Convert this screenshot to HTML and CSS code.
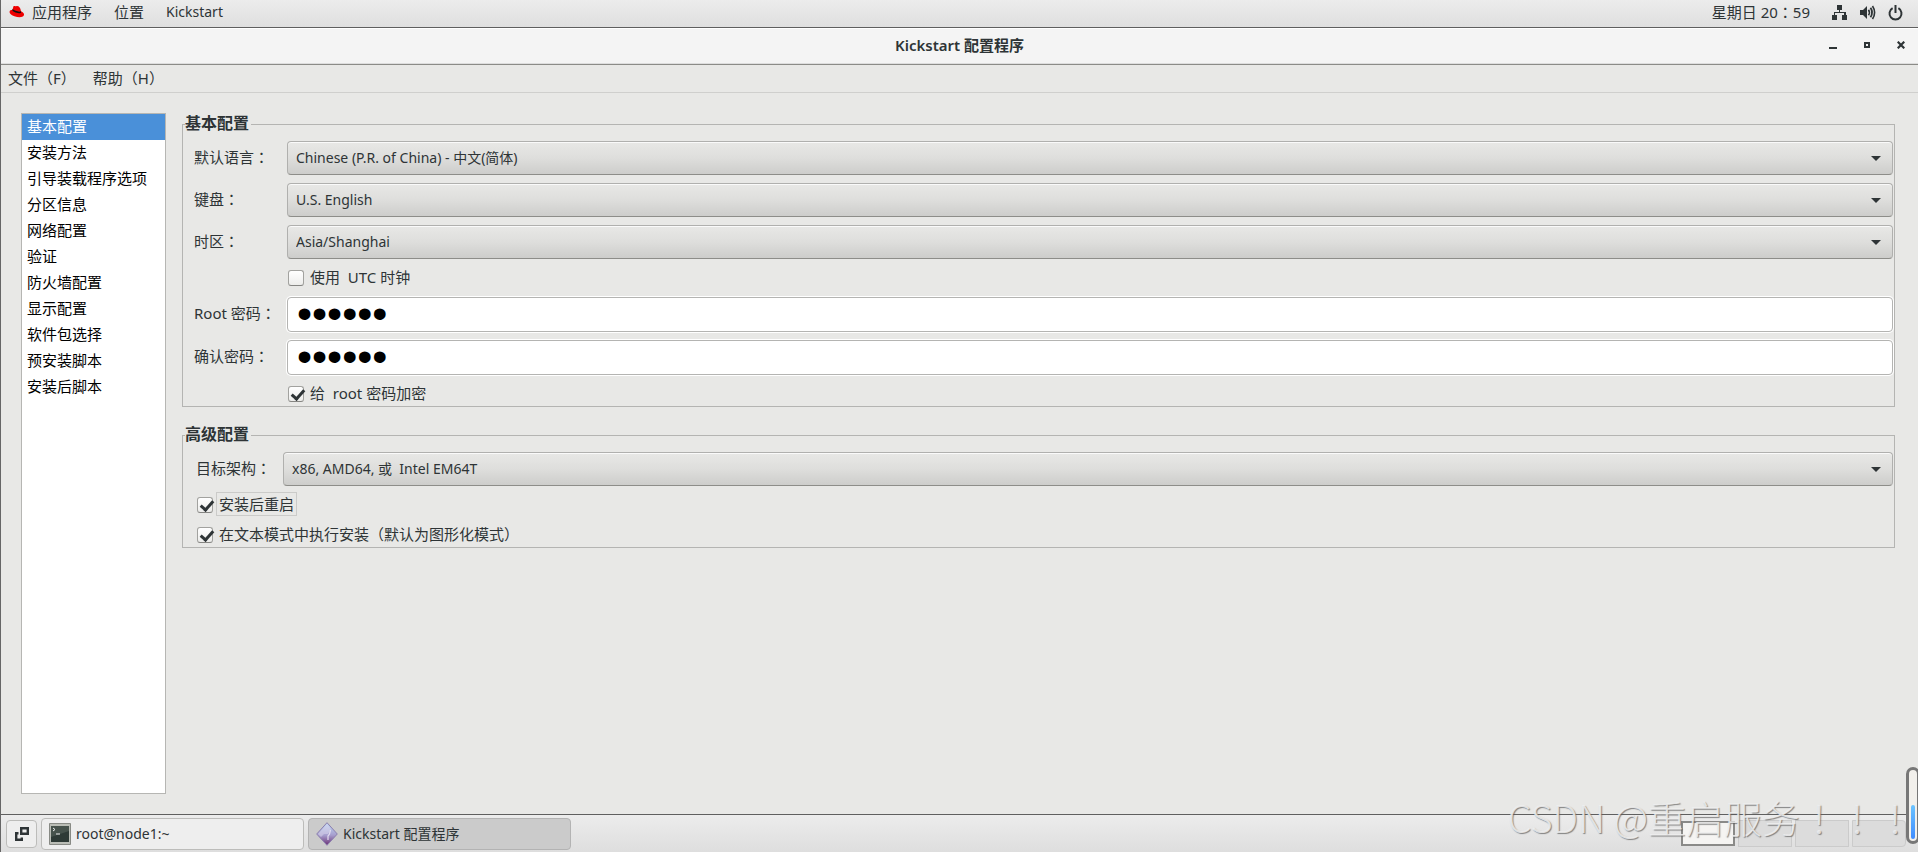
FILE: index.html
```html
<!DOCTYPE html>
<html lang="zh-CN">
<head>
  <meta charset="UTF-8">
  <meta name="viewport" content="width=device-width, initial-scale=1.0">
  <title>Kickstart 配置程序</title>
  <link rel="stylesheet" href="styles.css">
</head>
<body>
  <header class="top-bar">
    <nav class="top-menu">
      <button type="button" class="apps">
        <svg width="16" height="14" viewBox="0 0 16 14">
          <path d="M4.5 1.2 C5.4 .8 6 1.6 7.2 1.2 C9.4 .6 11.3 2.2 12 6.2 C14.6 7.4 15.6 9 14.8 10.6 C13.6 12.8 9 12.6 5.4 11.2 C1.8 9.8 .2 7.8 .6 6.4 C.9 5.2 2.2 4.9 3.4 5 Z" fill="#e00"/>
          <path d="M3.3 5 C3.2 6.6 8.6 8.9 11.6 7.9 C12.2 7.6 12.1 6.9 12 6.2 C10.6 7.4 5.4 6 3.6 4.1 Z" fill="#111"/>
        </svg>
        应用程序
      </button>
      <button type="button">位置</button>
      <button type="button">Kickstart</button>
    </nav>
    <div class="status">
      <span class="clock">星期日 20<span class="mark" lang="zh-TW">：</span>59</span>
      <svg width="16" height="16" viewBox="0 0 16 16" fill="#2e3436">
        <path d="M5 0h5v5H8v2h6v3h1v5h-5v-5h2V8H3v2h2v5H0v-5h2V7h5V5H5z"/>
      </svg>
      <svg width="16" height="16" viewBox="0 0 16 16" fill="none" stroke="#2e3436">
        <path d="M0 5h3l4-4v13l-4-4H0z" fill="#2e3436" stroke="none"/>
        <path d="M8.5 4.8q1.8 2.7 0 5.4" stroke-width="1.6"/>
        <path d="M10.5 2.8q3.2 4.7 0 9.4" stroke-width="1.8"/>
        <path d="M12.5 1q4.2 6.5 0 13" stroke-width="1.6"/>
      </svg>
      <svg width="16" height="16" viewBox="0 0 16 16" fill="none" stroke="#2e3436" stroke-width="2">
        <path d="M4.6 3.2a6 6 0 1 0 5.8 0M7.5 0v8"/>
      </svg>
    </div>
  </header>

  <div class="title-bar">
    <h1>Kickstart 配置程序</h1>
    <div class="window-buttons">
      <button type="button" aria-label="最小化">
        <svg width="8" height="8"><path d="M0 6h8v2H0z" fill="#2e3436"/></svg>
      </button>
      <button type="button" aria-label="最大化">
        <svg width="8" height="8"><path d="M2 2h4v4H2z" fill="none" stroke="#2e3436" stroke-width="2"/></svg>
      </button>
      <button type="button" aria-label="关闭">
        <svg width="8" height="8"><path d="M.7 .7l6.6 6.6M7.3 .7L.7 7.3" stroke="#2e3436" stroke-width="2.2"/></svg>
      </button>
    </div>
  </div>

  <nav class="menu-bar">
    <button type="button">文件（F）</button>
    <button type="button">帮助（H）</button>
  </nav>

  <main>
    <ul class="sections">
      <li class="selected">基本配置</li>
      <li>安装方法</li>
      <li>引导装载程序选项</li>
      <li>分区信息</li>
      <li>网络配置</li>
      <li>验证</li>
      <li>防火墙配置</li>
      <li>显示配置</li>
      <li>软件包选择</li>
      <li>预安装脚本</li>
      <li>安装后脚本</li>
    </ul>

    <form class="settings">
      <fieldset>
        <legend>基本配置</legend>
        <div class="row">
          <label for="lang">默认语言<span class="mark" lang="zh-TW">：</span></label>
          <div class="combo"><select id="lang"><option>Chinese (P.R. of China) - 中文(简体)</option></select></div>
        </div>
        <div class="row">
          <label for="keyboard">键盘<span class="mark" lang="zh-TW">：</span></label>
          <div class="combo"><select id="keyboard"><option>U.S. English</option></select></div>
        </div>
        <div class="row">
          <label for="timezone">时区<span class="mark" lang="zh-TW">：</span></label>
          <div class="combo"><select id="timezone"><option>Asia/Shanghai</option></select></div>
        </div>
        <label class="check indent"><input type="checkbox"><span>使用  UTC 时钟</span></label>
        <div class="row">
          <label for="password">Root 密码<span class="mark" lang="zh-TW">：</span></label>
          <input type="password" id="password" value="123456">
        </div>
        <div class="row">
          <label for="confirm">确认密码<span class="mark" lang="zh-TW">：</span></label>
          <input type="password" id="confirm" value="123456">
        </div>
        <label class="check indent"><input type="checkbox" checked><span>给  root 密码加密</span></label>
      </fieldset>

      <fieldset class="advanced">
        <legend>高级配置</legend>
        <div class="row">
          <label for="arch">目标架构<span class="mark" lang="zh-TW">：</span></label>
          <div class="combo"><select id="arch"><option>x86, AMD64, 或&nbsp; Intel EM64T</option></select></div>
        </div>
        <label class="check"><input type="checkbox" checked><span class="focused">安装后重启</span></label>
        <label class="check"><input type="checkbox" checked><span>在文本模式中执行安装（默认为图形化模式）</span></label>
      </fieldset>
    </form>
  </main>

  <footer class="task-bar">
    <button type="button" class="show-windows" aria-label="窗口">
      <svg width="14" height="14" viewBox="0 0 14 14" fill="none" stroke="#2e3436" stroke-width="2.4">
        <path d="M6.2 1.2h6.6v5.6H6.2z"/>
        <path d="M3.5 6.2H1.2v6.6h5.6v-2.3"/>
      </svg>
    </button>
    <button type="button" class="task">
      <svg width="22" height="22" viewBox="0 0 22 22">
        <path d="M.5 .5h21v21H.5z" fill="#babdb6" stroke="#888a85"/>
        <path d="M2 3h18v16H2z" fill="#2e3a36"/>
        <path d="M2 3h18v5L2 14z" fill="#46524c"/>
        <path d="M4 5l2 1.5L4 8M7 11h4" fill="none" stroke="#eee"/>
      </svg>
      root@node1:~
    </button>
    <button type="button" class="task active">
      <svg width="22" height="24" viewBox="0 0 22 24">
        <defs>
          <linearGradient id="gem" x1="0" y1="0" x2="0" y2="1">
            <stop offset="0" stop-color="#bcd8f4"/>
            <stop offset=".55" stop-color="#a79fce"/>
            <stop offset="1" stop-color="#6a2f75"/>
          </linearGradient>
        </defs>
        <path d="M11 .7L21.3 12 11 23.3 .7 12z" fill="url(#gem)" stroke="#8c7fae"/>
        <path d="M2 12l9-10 4 5-3 5H8l-3 3z" fill="#ded8ee" opacity=".5"/>
        <path d="M14.5 8l-1 4-1.5 2v4" fill="none" stroke="#e4dcf0" stroke-width="1.2"/>
      </svg>
      Kickstart 配置程序
    </button>
    <div class="workspaces">
      <span class="current"></span>
      <span></span>
      <span></span>
      <span></span>
    </div>
  </footer>

  <div class="level"><div></div></div>
  <div class="watermark">CSDN @重启服务<span class="mark" lang="zh-TW">！！！</span></div>
</body>
</html>
```
FILE: styles.css
```css
* {
  box-sizing: border-box;
}
body {
  margin: 0;
  min-height: 100vh;
  display: flex;
  flex-direction: column;
  position: relative;
  overflow: hidden;
  border-left: 1px solid #666;
  background: #e8e8e6;
  color: #2e3436;
  font-family: "Noto Sans", "Noto Sans CJK SC", sans-serif;
  font-size: 15px;
  line-height: 20px;
}
button, select, input {
  font: inherit;
  color: inherit;
}
button {
  border: none;
  background: none;
  padding: 0;
}
svg {
  display: block;
  flex: none;
}
/* full-width punctuation centred in its cell */
.mark {
  font-family: "Noto Sans CJK TC", sans-serif;
  line-height: 1;
}

/* top panel */
.top-bar {
  display: flex;
  justify-content: space-between;
  align-items: center;
  height: 28px;
  padding: 0 14px 2px 8px;
  background: linear-gradient(#ececec, #dfdfdf);
  border-bottom: 1px solid #5f5f5f;
}
.top-menu, .status, .apps {
  display: flex;
  align-items: center;
}
.top-menu {
  gap: 22px;
  line-height: 18px;
  padding-bottom: 2px;
}
.apps {
  gap: 7px;
}
.top-menu button:last-child {
  font-size: 14px;
}
.status {
  gap: 12px;
}
.clock {
  margin-right: 10px;
  padding-bottom: 2px;
}

/* window title */
.title-bar {
  display: flex;
  align-items: center;
  position: relative;
  height: 37px;
  padding-bottom: 3px;
  background: #f4f4f4;
  border-top: 1px solid #fff;
  border-bottom: 1px solid #8b8b87;
  box-shadow: inset 0 -1px #ddd;
}
.title-bar h1 {
  flex: 1;
  margin: 0;
  text-align: center;
  font-size: 15px;
  font-weight: 600;
}
.window-buttons {
  position: absolute;
  right: 13px;
  display: flex;
  gap: 26px;
}

.menu-bar {
  display: flex;
  align-items: center;
  gap: 17px;
  height: 28px;
  padding: 0 0 2px 7px;
  border-bottom: 1px solid #cfcfcd;
}

main {
  flex: 1;
  display: flex;
  gap: 16px;
  padding: 20px 23px 20px 20px;
}
.sections {
  width: 145px;
  margin: 0;
  padding: 0;
  list-style: none;
  background: #fff;
  border: 1px solid #b6b6b3;
  color: #000;
}
.sections li {
  height: 26px;
  padding-left: 5px;
  line-height: 24px;
}
.sections .selected {
  background: #4a90d9;
  color: #fff;
}

.settings {
  flex: 1;
}
fieldset {
  display: flex;
  flex-direction: column;
  gap: 8px;
  min-width: 0;
  margin: 0 0 17px;
  padding: 6px 1px 1px 11px;
  border: 1px solid #b4b4b2;
}
legend {
  height: 22px;
  margin-left: -9px;
  padding: 0 2px 0 0;
  font-size: 16px;
  font-weight: bold;
}
.row {
  display: grid;
  grid-template-columns: 93px 1fr;
}
.row label {
  line-height: 32px;
}
.advanced {
  padding-left: 13px;
}
.advanced legend {
  margin-left: -11px;
}
.advanced .row {
  grid-template-columns: 87px 1fr;
}
.advanced .check {
  margin-left: 1px;
}
.combo {
  position: relative;
}
.combo::after {
  content: "";
  position: absolute;
  right: 12px;
  top: 15px;
  border: 5px solid transparent;
  border-top-color: #2e3436;
  border-bottom: none;
  pointer-events: none;
}
.combo select {
  appearance: none;
  display: block;
  width: 100%;
  height: 34px;
  padding: 0 30px 0 8px;
  border: 1px solid #b0b0ae;
  border-bottom-color: #8d8d89;
  border-radius: 4px;
  background: linear-gradient(#e8e8e6, #dededc 50%, #cdcdcb);
  box-shadow: inset 0 1px #fafafa;
  font-size: 14px;
}
input[type="password"] {
  width: 100%;
  height: 35px;
  padding: 0 9px 2px;
  border: 1px solid #b4b4b2;
  border-radius: 4px;
  background: #fff;
  box-shadow: 0 0 0 1px #fff;
  color: #000;
  font-family: "Liberation Sans", sans-serif;
  font-size: 43px;
}
.check {
  display: flex;
  align-items: center;
  gap: 4px;
  height: 22px;
  white-space: pre;
}
.indent {
  margin-left: 94px;
}
.check span {
  padding: 0 2px;
  line-height: 22px;
  margin-top: -2px;
}
.check input {
  appearance: none;
  position: relative;
  width: 16px;
  height: 16px;
  margin: 0;
  border: 1px solid #a2a29f;
  border-bottom-color: #858582;
  border-radius: 3px;
  background: linear-gradient(#fff, #ededeb);
}
.check input:checked::after {
  content: "";
  position: absolute;
  left: 5px;
  top: 0;
  width: 5px;
  height: 10px;
  border: solid #2e3436;
  border-width: 0 3px 3px 0;
  transform: rotate(42deg);
}
.check .focused {
  outline: 1px solid #cbcbc9;
}

/* bottom panel */
.task-bar {
  display: flex;
  align-items: center;
  gap: 4px;
  height: 38px;
  padding: 0 12px 0 5px;
  border-top: 1px solid #5f5f5f;
  background: linear-gradient(#ececec, #dedede);
  font-size: 14px;
}
.show-windows, .task {
  display: flex;
  align-items: center;
  border: 1px solid #bcbcba;
  border-radius: 4px;
  background: #eee;
}
.show-windows {
  justify-content: center;
  width: 31px;
  height: 28px;
}
.task {
  gap: 5px;
  width: 263px;
  height: 32px;
  padding-left: 7px;
}
.task.active {
  background: #cbcbcb;
  border-color: #b3b3b3;
}
.workspaces {
  display: flex;
  align-items: center;
  gap: 3px;
  margin-left: auto;
}
.workspaces span {
  width: 54px;
  height: 27px;
  border: 1px solid #cbcbcb;
  background: #dcdcdc;
}
.workspaces span:last-child {
  border-radius: 0 4px 4px 0;
}
.workspaces .current {
  height: 25px;
  border: 2px solid #8a8a88;
  background: #f5f4f2;
}

/* overlays */
.level {
  position: absolute;
  right: -2px;
  bottom: 8px;
  width: 14px;
  height: 77px;
  padding: 2px;
  border: 3px solid #777;
  border-radius: 7px;
  background: #f2f0ec;
  display: flex;
  align-items: flex-end;
}
.level div {
  width: 100%;
  height: 34px;
  border-radius: 2px;
  background: linear-gradient(#6cc4ff, #3f8cff);
}
.watermark {
  position: absolute;
  right: 4px;
  bottom: 11px;
  color: rgba(240, 240, 240, 0.85);
  font-family: "Noto Sans CJK SC", sans-serif;
  font-size: 38px;
  font-weight: 300;
  line-height: 48px;
  text-shadow: 1px 1px 1px rgba(90, 90, 90, 0.7);
  pointer-events: none;
}
```
